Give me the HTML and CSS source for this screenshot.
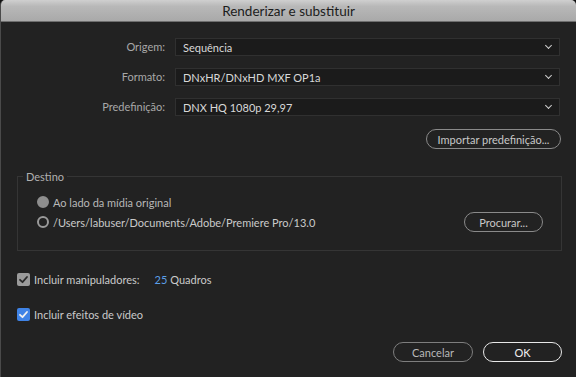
FILE: index.html
```html
<!DOCTYPE html>
<html lang="pt">
<head>
    <title>Renderizar e substituir</title>
    <link rel="stylesheet" href="styles.css">
</head>
<body>

<div class="window">
    <div class="titlebar">Renderizar e substituir</div>

    <div class="content">
        <div class="form">
            <label class="label">Origem:</label>
            <div class="select">Sequência<span class="chev"></span></div>

            <label class="label">Formato:</label>
            <div class="select">DNxHR/DNxHD MXF OP1a<span class="chev"></span></div>

            <label class="label">Predefinição:</label>
            <div class="select">DNX HQ 1080p 29,97<span class="chev"></span></div>
        </div>

        <div class="import-row">
            <button class="btn btn-import">Importar predefinição...</button>
        </div>

        <fieldset class="group">
            <legend>Destino</legend>
            <div class="radio-row dim">
                <span class="radio filled"></span>
                Ao lado da mídia original
            </div>
            <div class="radio-row path-row">
                <span class="path"><span class="radio"></span>/Users/labuser/Documents/Adobe/Premiere Pro/13.0</span>
                <button class="btn btn-browse">Procurar...</button>
            </div>
        </fieldset>

        <div class="check-row first">
            <span class="check gray"><svg viewBox="0 0 13 13"><path d="M3 6.8 L5.5 9.2 L10 4" /></svg></span>
            Incluir manipuladores:
            <span class="num">25</span> Quadros
        </div>

        <div class="check-row">
            <span class="check blue"><svg viewBox="0 0 13 13"><path d="M3 6.8 L5.5 9.2 L10 4" /></svg></span>
            Incluir efeitos de vídeo
        </div>

        <div class="footer">
            <button class="btn btn-cancel">Cancelar</button>
            <button class="btn btn-ok">OK</button>
        </div>
    </div>
</div>

</body>
</html>
```

FILE: styles.css
```css
body {
    margin: 0;
    padding: 0;
    background-color: #111;
    font-family: Lato, "Open Sans", sans-serif;
    font-size: 11px;
    color: #c8c8c8;
}
.window {
    width: 576px;
    height: 377px;
    background-color: #222;
    border-left: 1px solid #4a4a4a;
    box-sizing: border-box;
    border-radius: 5px 5px 0 0;
    overflow: hidden;
}
.titlebar {
    height: 22px;
    line-height: 23px;
    text-align: center;
    font-size: 13.5px;
    color: #1c1c1c;
    background: linear-gradient(#cfcfcf, #b8b8b8 30%, #a9a9a9);
    border-bottom: 1px solid #6e6e6e;
    box-sizing: border-box;
}
.content {
    padding: 16px 15px 0 15px;
}
.form {
    display: grid;
    grid-template-columns: 149px 385px;
    column-gap: 10px;
    row-gap: 12px;
}
.label {
    text-align: right;
    line-height: 18px;
    color: #a8a8a8;
}
.select {
    position: relative;
    height: 18px;
    line-height: 17px;
    padding-left: 7px;
    background-color: #1b1b1b;
    border: 1px solid #303030;
    box-sizing: border-box;
    color: #d8d8d8;
}
.chev {
    position: absolute;
    right: 8px;
    top: 4px;
    width: 4px;
    height: 4px;
    border-right: 1.5px solid #cfcfcf;
    border-bottom: 1.5px solid #cfcfcf;
    transform: rotate(45deg);
}
.import-row {
    display: flex;
    justify-content: flex-end;
    margin-top: 13px;
    width: 545px;
}
.btn {
    font-family: Lato, "Open Sans", sans-serif;
    font-size: 11px;
    color: #c8c8c8;
    background: transparent;
    border: 1.5px solid #8a8a8a;
    border-radius: 10px;
    height: 20px;
    padding: 0;
    box-sizing: border-box;
}
.btn-import {
    width: 135px;
}
.group {
    margin: 21px 0 0 1px;
    width: 545px;
    height: 81px;
    box-sizing: border-box;
    border: 1px solid #353535;
    padding: 0 0 0 19px;
}
.group legend {
    padding: 0 3px;
    margin-left: -14px;
    color: #b0b0b0;
}
.radio-row {
    display: flex;
    align-items: center;
    height: 20px;
    margin-top: 9px;
    color: #cacaca;
}
.radio-row.dim {
    color: #b8b8b8;
}
.path-row {
    justify-content: space-between;
    margin-top: 0;
    padding-right: 18px;
}
.path {
    display: flex;
    align-items: center;
}
.radio {
    width: 12px;
    height: 12px;
    border-radius: 50%;
    border: 2px solid #9a9a9a;
    box-sizing: border-box;
    margin-right: 4px;
}
.radio.filled {
    background-color: #8e8e8e;
    border-color: #8e8e8e;
}
.btn-browse {
    width: 79px;
}
.check-row {
    display: flex;
    align-items: center;
    margin-top: 21px;
    height: 15px;
    color: #cacaca;
}
.check-row + .check-row {
    margin-top: 20px;
}
.check {
    width: 13px;
    height: 13px;
    border-radius: 2px;
    margin: 0 4px 0 1px;
    display: inline-flex;
}
.check svg {
    width: 13px;
    height: 13px;
}
.check path {
    fill: none;
    stroke-width: 1.8;
    stroke-linecap: round;
    stroke-linejoin: round;
}
.check.gray {
    background-color: #9b9b9b;
}
.check.gray path {
    stroke: #2a2a2a;
}
.check.blue {
    background-color: #3f83e6;
}
.check.blue path {
    stroke: #f0f0f0;
}
.num {
    color: #5b9fe8;
    margin-left: 15px;
    margin-right: 3px;
}
.footer {
    display: flex;
    justify-content: flex-end;
    gap: 10px;
    width: 546px;
    margin-top: 20px;
}
.btn-cancel {
    width: 80px;
    color: #b8b8b8;
    border-color: #7e7e7e;
}
.btn-ok {
    width: 79px;
    color: #f0f0f0;
    border-color: #e8e8e8;
}
```
